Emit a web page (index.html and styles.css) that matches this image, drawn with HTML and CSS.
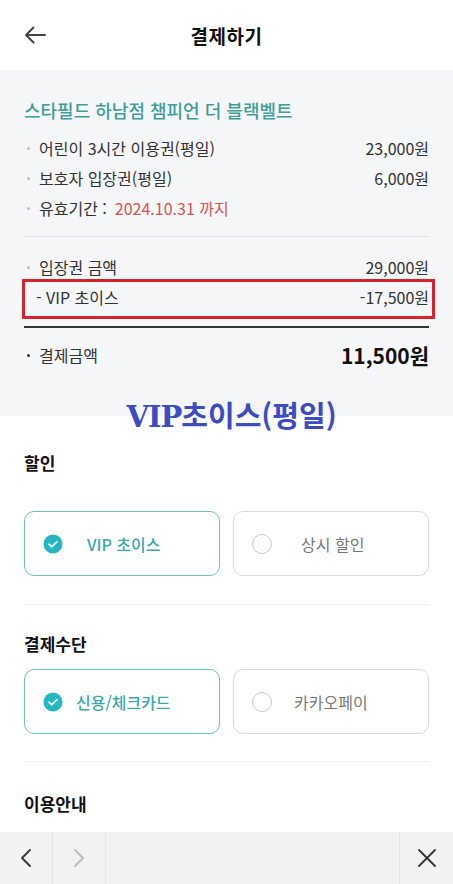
FILE: index.html
```html
<!DOCTYPE html>
<html lang="ko">
<head>
<meta charset="utf-8">
<link rel="stylesheet" href="styles.css">
</head>
<body>
<div class="page">
  <header class="topbar">
    <svg class="back" width="22" height="18" viewBox="0 0 22 18"><path d="M21 9H2M9.5 1.5L2 9l7.5 7.5" fill="none" stroke="#444" stroke-width="2" stroke-linecap="round" stroke-linejoin="round"/></svg>
    <h1 class="title">결제하기</h1>
  </header>

  <section class="summary">
    <h2 class="store">스타필드 하남점 챔피언 더 블랙벨트</h2>
    <div class="row"><span class="label"><i class="dot"></i>어린이 3시간 이용권(평일)</span><span class="val">23,000원</span></div>
    <div class="row"><span class="label"><i class="dot"></i>보호자 입장권(평일)</span><span class="val">6,000원</span></div>
    <div class="row"><span class="label"><i class="dot"></i>유효기간 :<span class="date">2024.10.31 까지</span></span></div>
    <hr class="div-light">
    <div class="row"><span class="label"><i class="dot"></i>입장권 금액</span><span class="val">29,000원</span></div>
    <div class="row marked"><span class="label">- VIP 초이스</span><span class="val">-17,500원</span></div>
    <hr class="div-dark">
    <div class="row total"><span class="label"><i class="dot dark"></i>결제금액</span><span class="val big">11,500원</span></div>
    <div class="stamp"><span class="vip">VIP</span>초이스(평일)</div>
  </section>

  <section class="sheet">
    <h3 class="sec-title first">할인</h3>
    <div class="opts">
      <div class="opt on"><span class="chk"><svg width="20" height="20" viewBox="0 0 20 20"><circle cx="10" cy="10" r="9.5" fill="#25b7c0"/><path d="M6 10.2l2.8 2.6L14 7.6" fill="none" stroke="#fff" stroke-width="1.6" stroke-linecap="round" stroke-linejoin="round"/></svg></span><span class="opt-text t1">VIP 초이스</span></div>
      <div class="opt"><span class="radio"></span><span class="opt-text t2">상시 할인</span></div>
    </div>
    <hr class="div-sheet">
    <h3 class="sec-title pay">결제수단</h3>
    <div class="opts">
      <div class="opt on"><span class="chk"><svg width="20" height="20" viewBox="0 0 20 20"><circle cx="10" cy="10" r="9.5" fill="#25b7c0"/><path d="M6 10.2l2.8 2.6L14 7.6" fill="none" stroke="#fff" stroke-width="1.6" stroke-linecap="round" stroke-linejoin="round"/></svg></span><span class="opt-text t3">신용/체크카드</span></div>
      <div class="opt"><span class="radio"></span><span class="opt-text t4">카카오페이</span></div>
    </div>
    <hr class="div-sheet second">
    <h3 class="sec-title info">이용안내</h3>
  </section>

  <nav class="bottombar">
    <div class="cell narrow"><svg width="14" height="20" viewBox="0 0 14 20"><path d="M11 2L3 10l8 8" fill="none" stroke="#333" stroke-width="1.8" stroke-linecap="round" stroke-linejoin="round"/></svg></div>
    <div class="cell narrow"><svg width="14" height="20" viewBox="0 0 14 20"><path d="M3 2l8 8-8 8" fill="none" stroke="#bbb" stroke-width="1.8" stroke-linecap="round" stroke-linejoin="round"/></svg></div>
    <div class="cell grow"></div>
    <div class="cell last"><svg width="22" height="22" viewBox="0 0 22 22"><path d="M3 3l16 16M19 3L3 19" fill="none" stroke="#333" stroke-width="1.8" stroke-linecap="round"/></svg></div>
  </nav>
</div>
</body>
</html>
```

FILE: styles.css
```css
* { box-sizing: border-box; }
html, body { margin: 0; padding: 0; }
body {
  font-family: "Noto Sans CJK KR", "Noto Sans", sans-serif;
  color: #222;
  background: #fff;
}
.page { width: 453px; height: 884px; overflow: hidden; display: flex; flex-direction: column; }

.topbar {
  height: 70px;
  display: flex;
  align-items: center;
  justify-content: center;
  position: relative;
  background: #fff;
  flex: none;
}
.back { position: absolute; left: 24px; top: 26px; }
.title { margin: 0; font-size: 19px; font-weight: 700; color: #111; letter-spacing: 0.5px; }

.summary {
  background: #f5f6f8;
  padding: 27px 24px 0;
  height: 346px;
  position: relative;
  flex: none;
}
.store {
  margin: 0 0 10px;
  font-size: 18px;
  line-height: 26px;
  font-weight: 500;
  color: #3f9d9a;
}
.row {
  display: flex;
  justify-content: space-between;
  align-items: center;
  height: 30px;
  font-size: 16px;
  color: #333;
}
.label { display: flex; align-items: center; }
.dot {
  display: inline-block;
  width: 3px; height: 3px;
  border-radius: 50%;
  background: #bbb;
  margin: 0 9px 0 3px;
}
.dot.dark { background: #333; }
.date { color: #d9534f; margin-left: 8px; }
.val { color: #333; }
.div-light { border: 0; border-top: 1px solid #e2e3e6; margin: 13px 0 15px; }
.marked { position: relative; padding-left: 12px; }
.marked::after {
  content: "";
  position: absolute;
  left: -2px;
  right: -6px;
  top: -3px;
  bottom: -7px;
  border: 3px solid #d6232d;
}
.div-dark { border: 0; border-top: 2px solid #333; margin: 14px 0 11px; }
.total { height: 32px; }
.big { font-size: 21px; font-weight: 700; color: #111; }

.stamp {
  position: absolute;
  left: 0; right: 0;
  top: 323px;
  text-align: center;
  font-size: 29px;
  font-weight: 700;
  color: #3d4cc2;
  z-index: 2;
  padding-left: 10px;
}
.vip { font-family: "DejaVu Serif", "Liberation Serif", serif; font-weight: 700; letter-spacing: -1px; }

.sheet {
  background: #fff;
  border-radius: 16px 16px 0 0;
  padding: 0 24px;
  flex: 1;
  position: relative;
  z-index: 1;
}
.sec-title { margin: 0; font-size: 17px; line-height: 24px; font-weight: 700; color: #111; }
.sec-title.first { padding-top: 35px; }
.opts {
  display: grid;
  grid-template-columns: 1fr 1fr;
  gap: 13px;
  margin-top: 36px;
}
.sec-title.pay { padding-top: 27px; }
.sec-title.pay + .opts { margin-top: 13px; }
.opt {
  height: 65px;
  border: 1px solid #d9d9dc;
  border-radius: 10px;
  display: flex;
  align-items: center;
  padding-left: 18px;
  font-size: 16px;
  color: #777;
}
.opt.on { border-color: #6cc4bd; color: #3aa9a9; font-weight: 500; }
.chk { display: flex; width: 20px; height: 20px; }
.radio {
  width: 20px; height: 20px;
  border: 1.5px solid #c8c8c8;
  border-radius: 50%;
}
.t1 { margin-left: 24px; }
.t2 { margin-left: 29px; }
.t3 { margin-left: 13px; }
.t4 { margin-left: 22px; }
.div-sheet { border: 0; border-top: 1px solid #eeeff1; margin: 28px 0 0; }
.div-sheet.second { margin-top: 27px; }
.sec-title.info { padding-top: 30px; }

.bottombar {
  height: 52px;
  background: #f2f2f4;
  display: flex;
  flex: none;
}
.cell { display: flex; align-items: center; justify-content: center; border-right: 1px solid #e6e6e9; }
.cell.narrow { width: 53px; }
.cell.grow { flex: 1; }
.cell.last { width: 53px; border-right: 0; }
```
